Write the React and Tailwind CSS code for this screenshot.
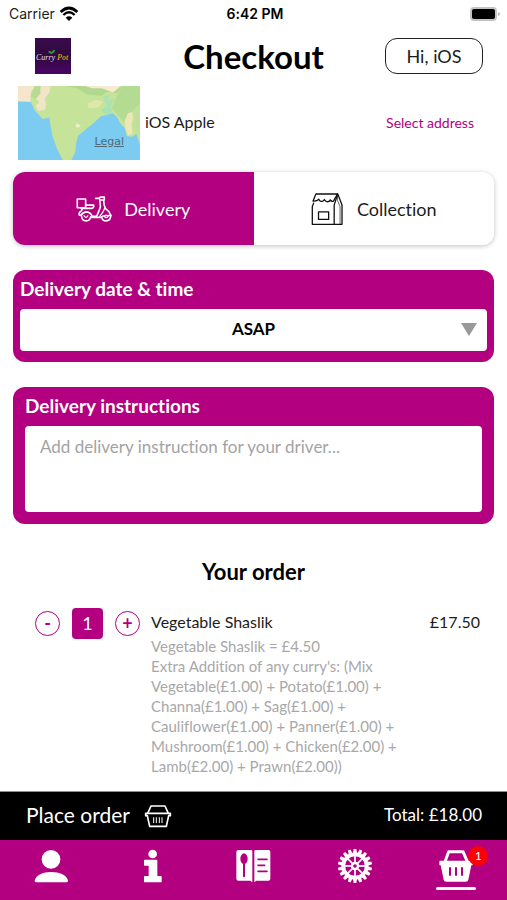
import { useState } from "react";

function WifiIcon() {
  return (
    <svg className="h-4 w-5" viewBox="184 14 60 48" fill="none" stroke="#000" aria-hidden="true">
      <path d="M189 32 Q214 8 239 32" strokeWidth="8" />
      <path d="M197 41 Q214 25 231 41" strokeWidth="7" />
      <path d="M214 59 L204 49 Q214 41 224 49 Z" fill="#000" stroke="none" />
    </svg>
  );
}

function BatteryIcon() {
  return (
    <svg className="h-4 w-8" viewBox="0 0 32 16" aria-hidden="true">
      <rect x="1" y="1" width="27" height="14" rx="4" fill="#c4c4c4" />
      <path d="M29 6 Q33 8 29 10 Z" fill="#b5b5b5" />
      <rect x="3" y="3" width="23" height="10" rx="2" fill="#000" />
    </svg>
  );
}

function Logo() {
  return (
    <svg className="h-9 w-9" viewBox="0 0 36 36" role="img" aria-label="Curry Pot">
      <defs>
        <linearGradient id="logoBg" x1="0" y1="0" x2="0" y2="1">
          <stop offset="0" stopColor="#3a0a4c" />
          <stop offset="0.5" stopColor="#2f0a3e" />
          <stop offset="1" stopColor="#4a0566" />
        </linearGradient>
      </defs>
      <rect width="36" height="36" fill="url(#logoBg)" />
      <text x="1" y="22" fontSize="8" fontStyle="italic" fill="#e9dff0" fontFamily="Liberation Serif, serif">Curry</text>
      <text x="22" y="22" fontSize="8" fontWeight="700" fontStyle="italic" fill="#c98a1e" fontFamily="Liberation Serif, serif">Pot</text>
      <path d="M16 16 Q12 14 14 13 Q16 13 17 14 Q18 11 20 12 Q20 15 16 16Z" fill="#2e9a35" />
    </svg>
  );
}

function MapThumb() {
  return (
    <svg className="block h-full w-full" viewBox="54 259 366 220" preserveAspectRatio="none" role="img" aria-label="Map of India">
      <rect x="54" y="259" width="366" height="220" fill="#7ccbf0" />
      <path d="M54 259 H420 V432 L409 402 L396 410 L380 408 L374 384 L362 372 L350 350 L338 340 L316 346 L302 350 L282 368 L262 384 L234 408 L228 432 L226 455 L214 479 H188 L172 448 L158 410 L152 380 L148 352 L128 358 L116 344 L106 334 L92 306 L54 304 Z" fill="#c6e39a" />
      <path d="M54 259 H104 L92 280 L92 306 L54 304 Z" fill="#f6e5cd" />
      <path d="M118 259 H152 L148 278 L134 296 L138 312 L136 328 L116 334 L106 318 L118 308 L108 296 L122 282 Z" fill="#f2e4c6" />
      <path d="M104 259 H122 L120 282 L106 298 L92 290 Z" fill="#b5dc92" />
      <path d="M196 259 L232 266 L262 284 L304 288 L322 276 L352 280 L366 262 L330 259 Z" fill="#b0d98d" />
      <path d="M256 259 H362 L350 270 L338 278 L306 266 L276 266 Z" fill="#f7ead0" />
      <path d="M368 259 H420 V312 L400 330 L388 350 L372 366 L352 344 L336 326 L346 298 Z" fill="#b4db92" />
      <path d="M308 292 L328 286 L324 302 L344 296 L332 320 L338 340 L316 344 L304 330 L322 318 Z" fill="#a9e3b4" />
      <path d="M262 310 L290 300 L310 306 L296 322 L266 326 Z" fill="#dfe7ab" />
      <path d="M384 340 L396 336 L400 352 L394 372 L398 400 L384 406 L376 384 L374 362 Z" fill="#ebe7b6" />
      <path d="M402 330 L420 318 V406 L408 398 L400 372 Z" fill="#c1e09a" />
      <path d="M230 370 l12 6 l-6 8 l-10 -4 Z" fill="#eef0c4" />
      <path d="M368 380 l8 14 l2 10 l-6 -8 Z" fill="#7ccbf0" />
    </svg>
  );
}

function ScooterIcon() {
  return (
    <svg className="h-7 w-9" viewBox="226 89 112 84" fill="none" stroke="#fff" strokeWidth="5" strokeLinecap="round" strokeLinejoin="round" aria-hidden="true">
      <path d="M230 100 H256 V127 H230 Z" />
      <path d="M256 119 H281 Q283 127 274 129 H242 Q248 133 241 138 Q234 142 236 150 H242 Q248 140 260 140 Q273 143 276 154 H290 Q298 138 302 124 L300 104" />
      <path d="M287 98 H298 L302 94 H314 V103 H300" />
      <path d="M312 104 Q312 120 318 130 Q330 138 335 151 H318 Q308 152 304 157 H272" />
      <path d="M316 128 Q310 142 300 154" strokeWidth="4" />
      <path d="M243 152 Q244 168 257 168 Q270 168 271 156" />
      <path d="M306 157 Q308 168 320 168 Q332 168 334 154" />
      <path d="M251 152 Q257 162 263 152 M314 154 Q320 162 326 154" strokeWidth="4" />
    </svg>
  );
}

function BagIcon() {
  return (
    <svg className="h-9 w-8" viewBox="171 78 98 104" fill="none" stroke="#111" strokeWidth="4" strokeLinecap="round" strokeLinejoin="round" aria-hidden="true">
      <path d="M186 84 H252 L240 106 Q233 108 230 102 Q226 110 218 107 Q214 104 212 101 Q208 109 200 106 Q196 104 195 100 Q190 107 177 106 Z" />
      <path d="M179 112 L175 122 V177 H266 V118 L253 84" />
      <path d="M252 86 L242 118 V176" />
      <path d="M252 92 V104 L260 122 V176" strokeWidth="2" />
      <path d="M194 139 H225 V162 H194 Z" />
    </svg>
  );
}

function BasketOutlineIcon() {
  return (
    <svg className="h-6 w-7" viewBox="437 56 84 72" fill="none" stroke="#fff" strokeWidth="5" strokeLinecap="round" strokeLinejoin="round" aria-hidden="true">
      <path d="M449 82 L458 62 H500 L509 82" />
      <path d="M442 84 H516 V91 H511 L504 123 H454 L447 91 H442 Z" />
      <path d="M466 97 V112 M474 97 V112 M483 97 V112 M491 97 V112" strokeWidth="3" />
    </svg>
  );
}

function UserIcon() {
  return (
    <svg className="h-9 w-9" viewBox="100 189 108 108" fill="#fff" aria-hidden="true">
      <circle cx="154" cy="223" r="28" />
      <path d="M105 287 C108 270 130 261 154 261 C180 261 202 270 205 287 Q205 292 200 292 H110 Q105 292 105 287 Z" />
    </svg>
  );
}

function InfoIcon() {
  return (
    <svg className="h-9 w-9" viewBox="402 189 108 108" fill="#fff" aria-hidden="true">
      <circle cx="458" cy="207" r="13" />
      <path d="M434 224 H470 Q472 224 472 226 V273 H483 Q485 273 485 275 V290 Q485 292 483 292 H434 Q432 292 432 290 V275 Q432 273 434 273 H446 V242 H434 Q432 242 432 240 V226 Q432 224 434 224 Z" />
    </svg>
  );
}

function MenuBookIcon() {
  return (
    <svg className="h-9 w-9" viewBox="706 189 108 108" aria-hidden="true">
      <path d="M716 195 H754 Q758 195 758 199 V292 L752 287 H716 Q710 287 710 281 V201 Q710 195 716 195 Z" fill="#fff" />
      <path d="M768 195 H806 Q812 195 812 201 V281 Q812 287 806 287 H770 L764 292 V199 Q764 195 768 195 Z" fill="#fff" />
      <ellipse cx="733" cy="221" rx="11" ry="16" fill="#b20080" />
      <path d="M733 234 V274" stroke="#b20080" strokeWidth="6" strokeLinecap="round" />
      <path d="M775 223 H802 M775 241 H795 M775 259 H802" stroke="#b20080" strokeWidth="5" strokeLinecap="round" />
    </svg>
  );
}

const TEETH = [0, 20, 40, 60, 80, 100, 120, 140, 160, 180, 200, 220, 240, 260, 280, 300, 320, 340];
const SPOKES = [0, 45, 90, 135, 180, 225, 270, 315];

function GearIcon() {
  return (
    <svg className="h-9 w-9" viewBox="-54 -54 108 108" aria-hidden="true">
      {TEETH.map((a) => (
        <path key={a} d="M-6 -38 L-4 -51 H4 L6 -38 Z" fill="#fff" transform={`rotate(${a})`} />
      ))}
      <circle r="35" fill="none" stroke="#fff" strokeWidth="11" />
      {SPOKES.map((a) => (
        <path key={a} d="M0 -9 V-32" stroke="#fff" strokeWidth="5" transform={`rotate(${a})`} />
      ))}
      <circle r="9" fill="none" stroke="#fff" strokeWidth="7" />
    </svg>
  );
}

function BasketIcon() {
  return (
    <svg className="h-9 w-9" viewBox="555 189 108 108" aria-hidden="true">
      <path d="M576 230 L587 200 H630 L643 230" fill="none" stroke="#fff" strokeWidth="9" strokeLinejoin="round" />
      <path d="M561 227 H657 Q659 227 659 230 V239 Q659 241 655 241 L646 284 Q645 290 638 290 H580 Q573 290 572 284 L563 241 Q559 241 559 239 V230 Q559 227 561 227 Z" fill="#fff" />
      <path d="M591 247 V272 M609 247 V272 M627 247 V272" stroke="#b20080" strokeWidth="6" />
    </svg>
  );
}

function NavItem({ label, active, children }) {
  return (
    <a href="#" aria-label={label} aria-current={active ? "page" : undefined} className="flex flex-col items-center pt-2">
      <span className="relative">{children}</span>
      {active && <span className="mt-[3px] h-[3px] w-10 rounded-full bg-white" />}
    </a>
  );
}

export default function App() {
  const [mode, setMode] = useState("delivery");
  const [qty, setQty] = useState(1);
  const delivery = mode === "delivery";

  return (
    <div className="flex h-screen flex-col bg-white font-['Lato','Liberation_Sans',sans-serif] text-[#1c1c1c] [font-variant-ligatures:none]">
      <div className="grid h-7 shrink-0 grid-cols-3 items-center pr-[6px] pl-[9px] font-['Inter','Liberation_Sans',sans-serif] text-sm">
        <div className="flex items-center gap-1">
          <span>Carrier</span>
          <WifiIcon />
        </div>
        <div className="text-center font-semibold text-black">6:42 PM</div>
        <div className="flex justify-end">
          <BatteryIcon />
        </div>
      </div>

      <main className="min-h-0 flex-1 overflow-y-auto">
        <header className="grid h-14 grid-cols-[1fr_auto_1fr] items-center px-6">
          <div className="pl-[11px]">
            <Logo />
          </div>
          <h1 className="text-[33px] leading-[56px] font-bold text-black">Checkout</h1>
          <button type="button" className="h-9 w-[98px] justify-self-end rounded-xl border border-[#222] pb-px text-lg leading-none">
            Hi, iOS
          </button>
        </header>

        <section className="mt-[2px] flex h-[74px] items-center pr-[33px] pl-[18px]">
          <div className="relative h-full w-[122px]">
            <MapThumb />
            <a href="#" className="absolute right-4 bottom-[10px] font-['DejaVu_Sans',sans-serif] text-[11px] leading-4 text-[#4f6a78] underline">
              Legal
            </a>
          </div>
          <span className="ml-[5px] flex-1 pb-[3px] text-base">iOS Apple</span>
          <a href="#" className="text-sm text-[#b20080]">Select address</a>
        </section>

        <div className="mx-[13px] mt-3 flex h-[73px] overflow-hidden rounded-xl bg-white shadow-[0_1px_5px_rgba(0,0,0,0.25)]">
          <button
            type="button"
            aria-pressed={delivery}
            onClick={() => setMode("delivery")}
            className="flex flex-1 items-center justify-center gap-3 bg-[#b20080] text-lg text-white"
          >
            <ScooterIcon />
            Delivery
          </button>
          <button
            type="button"
            aria-pressed={!delivery}
            onClick={() => setMode("collection")}
            className="flex flex-1 items-center justify-center gap-[14px] bg-white text-lg"
          >
            <BagIcon />
            Collection
          </button>
        </div>

        <section className="mx-[13px] mt-[25px] rounded-xl bg-[#b20080] px-[7px] pb-[11px]">
          <label htmlFor="slot" className="block h-[39px] text-[19px] leading-[37px] font-bold text-white">
            Delivery date &amp; time
          </label>
          <div className="relative">
            <select
              id="slot"
              className="block h-[42px] w-full appearance-none rounded-sm bg-white pb-[2px] text-center text-[17px] font-bold text-black [text-align-last:center]"
            >
              <option>ASAP</option>
            </select>
            <svg className="pointer-events-none absolute top-[14px] right-[10px] h-[13px] w-4" viewBox="0 0 16 13" aria-hidden="true">
              <path d="M0 0 H16 L8 13 Z" fill="#999" />
            </svg>
          </div>
        </section>

        <section className="mx-[13px] mt-[25px] rounded-xl bg-[#b20080] px-3 pb-3">
          <label htmlFor="notes" className="block h-[39px] text-[19px] leading-[37px] font-bold text-white">
            Delivery instructions
          </label>
          <textarea
            id="notes"
            placeholder="Add delivery instruction for your driver..."
            className="block h-[86px] w-full resize-none rounded-sm bg-white px-[15px] py-[7px] text-[17px] leading-7 placeholder:text-[#a3a3a3]"
          />
        </section>

        <h2 className="mt-[34px] text-center text-[22px] leading-7 font-bold text-black">Your order</h2>

        <article className="mt-[22px] flex items-start pr-[27px] pl-[35px]">
          <div className="flex items-center gap-3">
            <button
              type="button"
              aria-label="Remove one"
              onClick={() => setQty(Math.max(0, qty - 1))}
              className="flex h-[25px] w-[25px] items-center justify-center rounded-full border border-[#b20080] pb-[2px] text-lg leading-none font-bold text-[#b20080]"
            >
              -
            </button>
            <span className="flex h-[31px] w-[31px] items-center justify-center rounded-sm bg-[#b20080] pb-[2px] text-lg text-white">{qty}</span>
            <button
              type="button"
              aria-label="Add one"
              onClick={() => setQty(qty + 1)}
              className="flex h-[25px] w-[25px] items-center justify-center rounded-full border border-[#b20080] pb-[2px] text-lg leading-none font-bold text-[#b20080]"
            >
              +
            </button>
          </div>
          <div className="ml-[11px] flex-1">
            <h3 className="text-base leading-7">Vegetable Shaslik</h3>
            <p className="w-[255px] text-[15px] leading-5 text-[#a8a8a8]">
              Vegetable Shaslik = £4.50
              <br />
              Extra Addition of any curry's: (Mix
              <br />
              Vegetable(£1.00) + Potato(£1.00) +
              <br />
              Channa(£1.00) + Sag(£1.00) +
              <br />
              Cauliflower(£1.00) + Panner(£1.00) +
              <br />
              Mushroom(£1.00) + Chicken(£2.00) +
              <br />
              Lamb(£2.00) + Prawn(£2.00))
            </p>
          </div>
          <span className="text-base leading-7">£17.50</span>
        </article>
      </main>

      <button type="button" className="flex h-[49px] shrink-0 items-center border-t border-[#8a8f8f] bg-black pr-[25px] pl-[26px] text-white">
        <span className="pb-[2px] text-[21px]">Place order</span>
        <span className="ml-[14px]">
          <BasketOutlineIcon />
        </span>
        <span className="ml-auto pb-[2px] text-[17px]">Total: £18.00</span>
      </button>

      <nav className="grid h-[60px] shrink-0 grid-cols-5 bg-[#b20080]" aria-label="Main">
        <NavItem label="Account">
          <UserIcon />
        </NavItem>
        <NavItem label="Information">
          <InfoIcon />
        </NavItem>
        <NavItem label="Menu">
          <MenuBookIcon />
        </NavItem>
        <NavItem label="Settings">
          <GearIcon />
        </NavItem>
        <NavItem label="Basket" active>
          <BasketIcon />
          <span className="absolute -top-[2px] -right-[14px] flex h-5 w-5 items-center justify-center rounded-full bg-[#fb0007] text-xs text-white">
            1
          </span>
        </NavItem>
      </nav>
    </div>
  );
}
